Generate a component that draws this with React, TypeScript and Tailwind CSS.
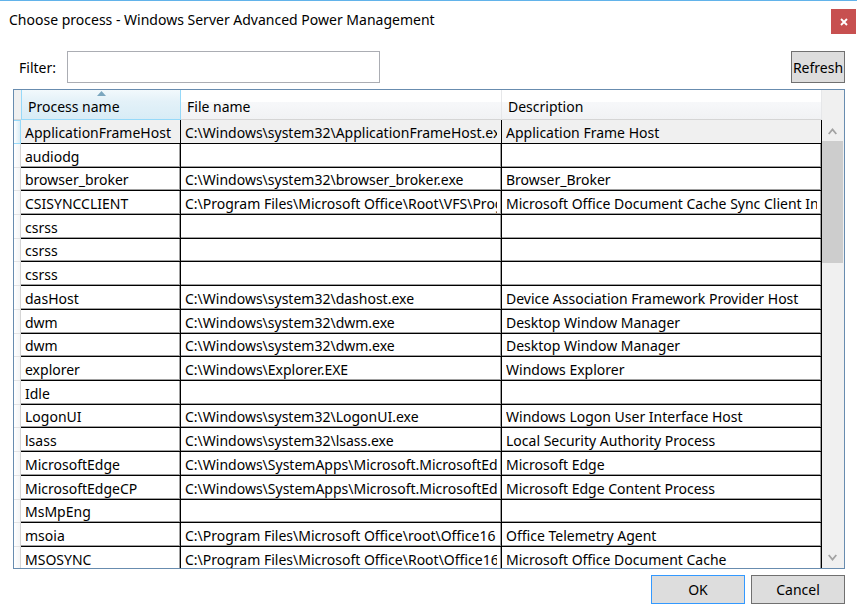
import { useState } from "react";

type Process = { name: string; file: string; description: string };

const processes: Process[] = [
  { name: "ApplicationFrameHost", file: "C:\\Windows\\system32\\ApplicationFrameHost.exe", description: "Application Frame Host" },
  { name: "audiodg", file: "", description: "" },
  { name: "browser_broker", file: "C:\\Windows\\system32\\browser_broker.exe", description: "Browser_Broker" },
  { name: "CSISYNCCLIENT", file: "C:\\Program Files\\Microsoft Office\\Root\\VFS\\Prog", description: "Microsoft Office Document Cache Sync Client Int" },
  { name: "csrss", file: "", description: "" },
  { name: "csrss", file: "", description: "" },
  { name: "csrss", file: "", description: "" },
  { name: "dasHost", file: "C:\\Windows\\system32\\dashost.exe", description: "Device Association Framework Provider Host" },
  { name: "dwm", file: "C:\\Windows\\system32\\dwm.exe", description: "Desktop Window Manager" },
  { name: "dwm", file: "C:\\Windows\\system32\\dwm.exe", description: "Desktop Window Manager" },
  { name: "explorer", file: "C:\\Windows\\Explorer.EXE", description: "Windows Explorer" },
  { name: "Idle", file: "", description: "" },
  { name: "LogonUI", file: "C:\\Windows\\system32\\LogonUI.exe", description: "Windows Logon User Interface Host" },
  { name: "lsass", file: "C:\\Windows\\system32\\lsass.exe", description: "Local Security Authority Process" },
  { name: "MicrosoftEdge", file: "C:\\Windows\\SystemApps\\Microsoft.MicrosoftEd", description: "Microsoft Edge" },
  { name: "MicrosoftEdgeCP", file: "C:\\Windows\\SystemApps\\Microsoft.MicrosoftEd", description: "Microsoft Edge Content Process" },
  { name: "MsMpEng", file: "", description: "" },
  { name: "msoia", file: "C:\\Program Files\\Microsoft Office\\root\\Office16", description: "Office Telemetry Agent" },
  { name: "MSOSYNC", file: "C:\\Program Files\\Microsoft Office\\Root\\Office16", description: "Microsoft Office Document Cache" },
];

// Rows alternate between two heights so that the grid averages just under 24px.
const shortRows = new Set([2, 5, 9, 12, 16]);

const plainHeader =
  "h-[30px] border-r border-b border-r-[#e6e7e9] border-b-[#d5d5d5] bg-linear-to-b from-white from-40% via-[#f7f8fa] via-40% to-[#f1f2f4] p-0 pt-1 pl-1.5 text-left font-normal";

function Cell({ text, selected }: { text: string; selected: boolean }) {
  return (
    <td
      className={
        selected
          ? "border-r border-b border-black bg-[#f0f0f0] p-0 px-1"
          : "border-r border-b border-black bg-white p-0 px-1 shadow-[inset_-1px_-1px_0_#a0a0a0]"
      }
    >
      <div className="h-[22px] overflow-hidden pt-0.5 leading-5 whitespace-nowrap">{text}</div>
    </td>
  );
}

export default function App() {
  const [filter, setFilter] = useState("");
  const [selected, setSelected] = useState(0);
  const rows = processes
    .map((process, index) => ({ process, index }))
    .filter(({ process }) => process.name.toLowerCase().includes(filter.toLowerCase()));

  return (
    <main className="flex h-screen flex-col border-t border-[#62b3ea] bg-white font-['Noto_Sans','Open_Sans',sans-serif] text-[14px] leading-5 text-black">
      <header className="flex items-start justify-between pt-2 pr-px pl-[9px]">
        <h1 className="pt-px">Choose process - Windows Server Advanced Power Management</h1>
        <button type="button" aria-label="Close" className="flex size-[25px] items-center justify-center bg-[#c75050]">
          <svg viewBox="0 0 8 8" className="size-2" aria-hidden="true">
            <path d="M1 1 7 7M7 1 1 7" stroke="white" strokeWidth="1.9" />
          </svg>
        </button>
      </header>

      <div className="flex min-h-0 flex-1 flex-col pt-[17px] pr-3 pb-3 pl-[13px]">
        <div className="flex h-8 items-stretch">
          <label htmlFor="filter" className="w-[54px] self-center pt-0.5 pl-1.5">
            Filter:
          </label>
          <input
            id="filter"
            type="text"
            value={filter}
            onChange={(event) => setFilter(event.target.value)}
            className="w-[313px] border border-[#abadb3] bg-white px-1 outline-none"
          />
          <button type="button" className="ml-auto w-[54px] border border-[#707070] bg-[#dddddd] pt-0.5">
            Refresh
          </button>
        </div>

        <section className="mt-1.5 flex min-h-0 flex-1 overflow-hidden border border-[#688caf] bg-[#f0f0f0]">
          <div className="min-w-0 flex-1 overflow-hidden">
            <table className="w-full table-fixed border-separate border-spacing-0">
              <colgroup>
                <col className="w-[7px]" />
                <col className="w-[160px]" />
                <col className="w-[321px]" />
                <col />
              </colgroup>
              <thead>
                <tr>
                  <td className="border-b border-[#d5d5d5] bg-[#f0f0f0] p-0" />
                  <th
                    scope="col"
                    aria-sort="ascending"
                    className="relative h-[30px] border-x border-b border-[#96d9f9] bg-linear-to-b from-[#f2f9fc] from-0% via-[#e3f1f8] via-40% to-[#d8ecf6] p-0 pt-1 pl-1.5 text-left font-normal"
                  >
                    <svg viewBox="0 0 9 5" className="absolute top-px left-[75px] h-[5px] w-[9px]" aria-hidden="true">
                      <path d="M0 5 4.5 0 9 5Z" fill="#7ba7bf" />
                    </svg>
                    Process name
                  </th>
                  <th scope="col" className={plainHeader}>File name</th>
                  <th scope="col" className={plainHeader}>Description</th>
                </tr>
              </thead>
              <tbody>
                {rows.map(({ process, index }, position) => (
                  <tr
                    key={index}
                    onClick={() => setSelected(index)}
                    className={shortRows.has(position) ? "h-[23px]" : "h-6"}
                  >
                    <td
                      className={
                        index === selected
                          ? "border border-l-0 border-[#96d9f9] bg-linear-to-r from-white to-[#d8ecf6] p-0"
                          : "border-r border-b border-r-[#d5d5d5] border-b-[#e2e3e5] bg-linear-to-r from-white to-[#f4f5f6] p-0"
                      }
                    />
                    <Cell text={process.name} selected={index === selected} />
                    <Cell text={process.file} selected={index === selected} />
                    <Cell text={process.description} selected={index === selected} />
                  </tr>
                ))}
              </tbody>
            </table>
          </div>

          <div className="flex w-[22px] flex-col pt-[30px] pr-px">
            <button type="button" aria-label="Scroll up" className="flex h-[21px] items-center justify-center pt-0.5">
              <svg viewBox="0 0 9 7" className="h-[7px] w-[9px]" fill="none" aria-hidden="true">
                <path d="M.7 6 4.5 1.5 8.3 6" stroke="#a3a3a3" strokeWidth="1.8" />
              </svg>
            </button>
            <div className="h-[122px] bg-[#cdcdcd]" />
            <button type="button" aria-label="Scroll down" className="mt-auto flex h-[21px] items-center justify-center">
              <svg viewBox="0 0 9 7" className="h-[7px] w-[9px]" fill="none" aria-hidden="true">
                <path d="M.7 1 4.5 5.5 8.3 1" stroke="#a3a3a3" strokeWidth="1.8" />
              </svg>
            </button>
          </div>
        </section>

        <footer className="mt-1.5 flex justify-end gap-1.5">
          <button type="button" className="h-[29px] w-[94px] border border-[#3399ff] bg-[#dddddd]">
            OK
          </button>
          <button type="button" className="h-[29px] w-[94px] border border-[#707070] bg-[#dddddd]">
            Cancel
          </button>
        </footer>
      </div>
    </main>
  );
}
